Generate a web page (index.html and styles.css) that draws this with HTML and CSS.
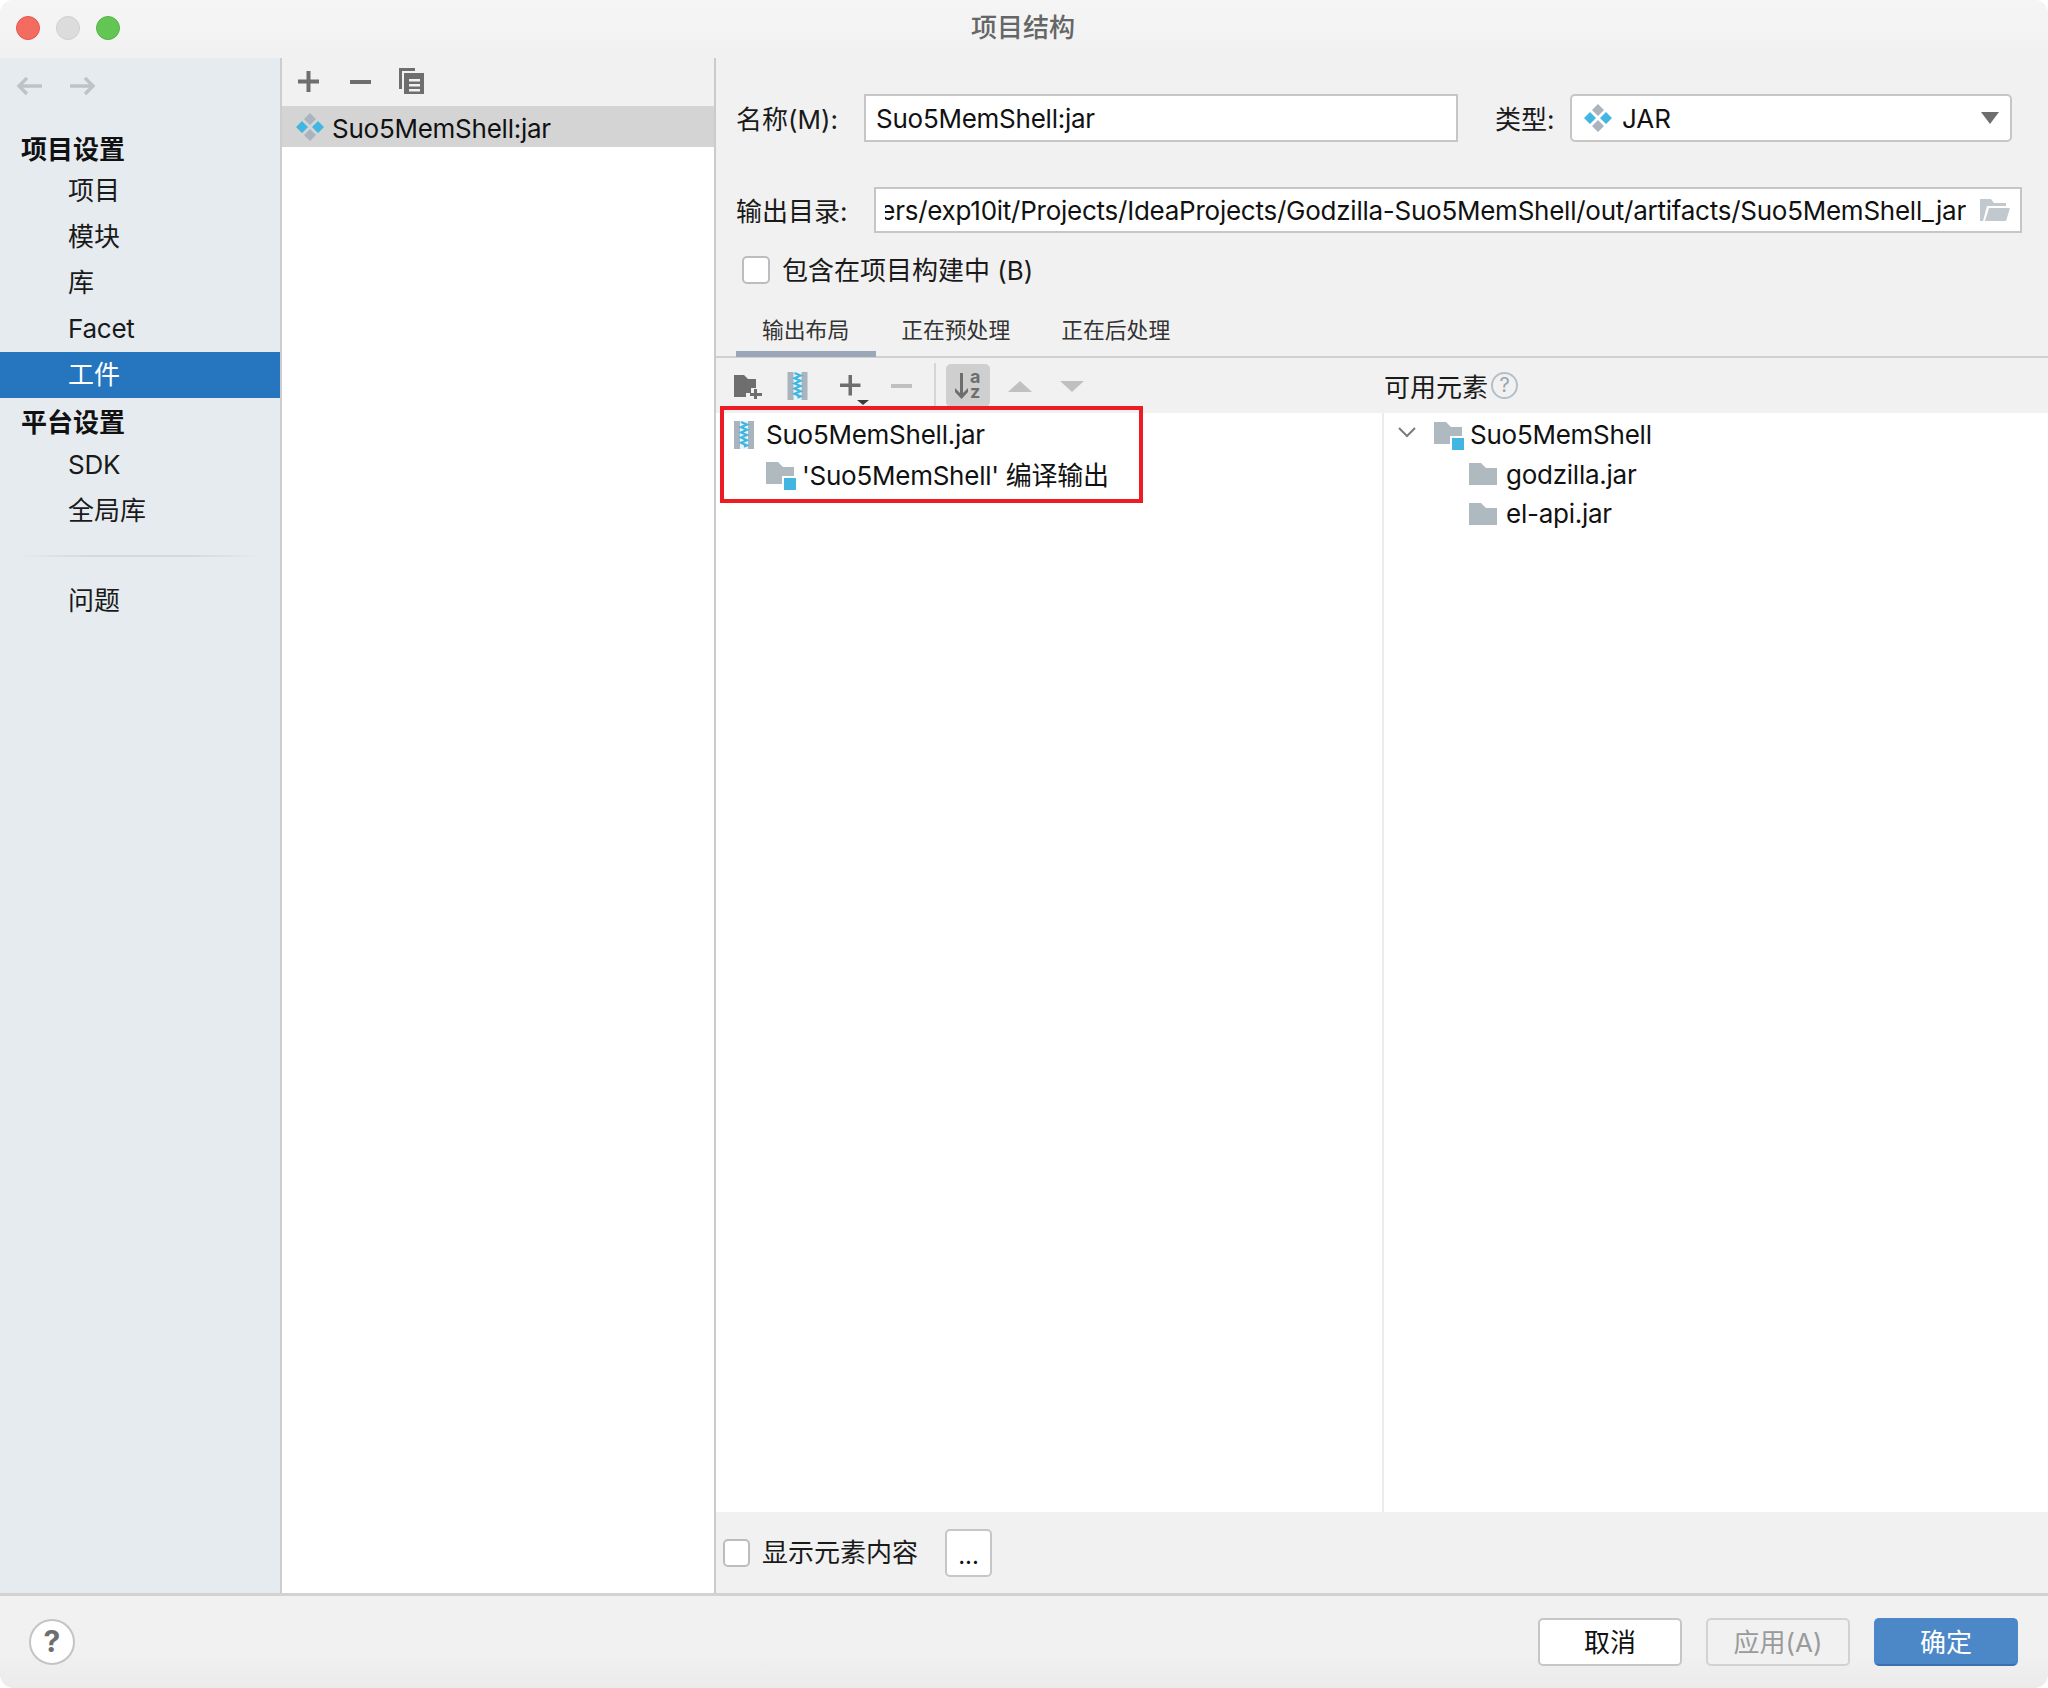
FILE: index.html
```html
<!DOCTYPE html>
<html lang="zh-CN">
<head>
<meta charset="utf-8">
<title>项目结构</title>
<link rel="stylesheet" href="styles.css">
</head>
<body>
<svg class="defs" width="0" height="0" aria-hidden="true">
  <symbol id="diamonds" viewBox="0 0 28 28">
    <path fill="#a9b4bf" d="M14 0l6 6-6 6-6-6zM14 16l6 6-6 6-6-6z"/>
    <path fill="#40b6e0" d="M6 8l6 6-6 6-6-6zM22 8l6 6-6 6-6-6z"/>
  </symbol>
  <symbol id="zip" viewBox="0 0 20 28">
    <rect width="20" height="28" fill="#a9b4bf"/>
    <rect x="6" width="8" height="28" fill="#e8f4fa"/>
    <path fill="none" stroke="#40b6e0" stroke-width="2.2" d="M7 1l6 2.6-6 2.6 6 2.6-6 2.6 6 2.6-6 2.6 6 2.6-6 2.6 6 2.6-3 1.4"/>
  </symbol>
  <symbol id="folder" viewBox="0 0 28 22">
    <path fill="#aeb9c0" d="M0 0h12l5 5h11v17H0z"/>
  </symbol>
  <symbol id="module" viewBox="0 0 30 28">
    <path fill="#aeb9c0" d="M0 0h12l5 5h11v17H0z"/>
    <rect x="16" y="14" width="14" height="14" fill="#fff"/>
    <rect x="18" y="16" width="12" height="12" fill="#40b6e0"/>
  </symbol>
</svg>

<div class="window">
  <header class="titlebar">
    <div class="lights">
      <span class="light red"></span>
      <span class="light gray"></span>
      <span class="light green"></span>
    </div>
    <div class="title">项目结构</div>
  </header>

  <div class="main">
    <aside class="sidebar">
      <div class="nav-arrows">
        <svg class="arrow" viewBox="0 0 26 20"><path fill="none" stroke="#bfc3c6" stroke-width="3.4" d="M26 10H3M11 2l-8 8 8 8"/></svg>
        <svg class="arrow" viewBox="0 0 26 20"><path fill="none" stroke="#bfc3c6" stroke-width="3.4" d="M0 10h23M15 2l8 8-8 8"/></svg>
      </div>
      <div class="side-head first">项目设置</div>
      <div class="side-item">项目</div>
      <div class="side-item">模块</div>
      <div class="side-item">库</div>
      <div class="side-item lat">Facet</div>
      <div class="side-item active">工件</div>
      <div class="side-head second">平台设置</div>
      <div class="side-item lat">SDK</div>
      <div class="side-item">全局库</div>
      <div class="side-sep"></div>
      <div class="side-item">问题</div>
    </aside>

    <section class="artifacts">
      <div class="art-toolbar">
        <svg class="tb-plus" viewBox="0 0 21 21"><path fill="#6e6e6e" d="M8.500 0h4v8.500h8.500v4h-8.500v8.500h-4v-8.500H0v-4h8.500z"/></svg>
        <svg class="tb-minus" viewBox="0 0 21 4"><rect width="21" height="4" fill="#6e6e6e"/></svg>
        <svg class="tb-copy" viewBox="0 0 25 26"><path fill="#6e6e6e" d="M0 0h16v3H3v18H0zM5 5h20v21H5zM10 11v2.500h11V11zM10 16v2.500h11V16zM10 21v2.500h11V21z" fill-rule="evenodd"/></svg>
      </div>
      <div class="art-row">
        <svg class="art-icon"><use href="#diamonds"/></svg>
        <span class="lat">Suo5MemShell:jar</span>
      </div>
    </section>

    <section class="detail">
      <div class="form-row first">
        <label class="lbl lbl-name">名称(M):</label>
        <div class="field name-field"><span class="lat">Suo5MemShell:jar</span></div>
        <label class="lbl lbl-type">类型:</label>
        <div class="field combo">
          <svg class="combo-icon"><use href="#diamonds"/></svg>
          <span class="combo-text">JAR</span>
          <svg class="combo-caret" viewBox="0 0 18 12"><path fill="#6e6e6e" d="M0 0h18L9 12z"/></svg>
        </div>
      </div>
      <div class="form-row second">
        <label class="lbl lbl-out">输出目录:</label>
        <div class="field path-field">
          <div class="path-clip"><span class="lat">/Users/exp10it/Projects/IdeaProjects/Godzilla-Suo5MemShell/out/artifacts/Suo5MemShell_jar</span></div>
          <svg class="path-icon" viewBox="0 0 30 22"><path fill="#c1c8ce" d="M0 0h11l3 4h12v3H7L3 22H0zM9 9h21l-4 13H5z"/></svg>
        </div>
      </div>
      <div class="check-row">
        <span class="check"></span>
        <span class="check-label">包含在项目构建中 (B)</span>
      </div>

      <div class="tabs">
        <div class="tab selected">输出布局</div>
        <div class="tab">正在预处理</div>
        <div class="tab">正在后处理</div>
      </div>

      <div class="layout-toolbar">
        <div class="lt-left">
          <svg class="i-newdir" viewBox="0 0 28 24"><path fill="#6e6e6e" d="M0 0h10l4 4h8v9h-5v5h-5v4H0z"/><path fill="#6e6e6e" d="M20 14h3v4h5v3h-5v3h-3v-3h-4v-3h4z"/></svg>
          <svg class="i-zip"><use href="#zip"/></svg>
          <svg class="i-plus" viewBox="0 0 29 30"><path fill="#6e6e6e" d="M8.500 0h3.500v8.500h8.500V12H12v8.500H8.500V12H0V8.500h8.500z"/><path fill="#3c3c3c" d="M17 25h12l-6 5z"/></svg>
          <svg class="i-minus" viewBox="0 0 21 4"><rect width="21" height="4" fill="#c0c0c0"/></svg>
          <span class="lt-sep"></span>
          <span class="sort-btn">
            <svg class="i-sort" viewBox="0 0 30 30">
              <path fill="#6e6e6e" d="M7 2h3v20l5-5v4l-6.500 7L2 21v-4l5 5z"/>
              <text x="17" y="12" class="sort-letter">a</text>
              <text x="17" y="27" class="sort-letter">z</text>
            </svg>
          </span>
          <svg class="i-up" viewBox="0 0 24 11"><path fill="#c0c0c0" d="M12 0l12 11H0z"/></svg>
          <svg class="i-down" viewBox="0 0 24 11"><path fill="#c0c0c0" d="M0 0h24L12 11z"/></svg>
        </div>
        <div class="lt-right">
          <span>可用元素</span>
          <span class="help-mini">?</span>
        </div>
      </div>

      <div class="trees">
        <div class="tree-left">
          <div class="tree-row r1">
            <svg class="t-zip"><use href="#zip"/></svg>
            <span class="lat">Suo5MemShell.jar</span>
          </div>
          <div class="tree-row r2">
            <svg class="t-module"><use href="#module"/></svg>
            <span class="lat">'Suo5MemShell' 编译输出</span>
          </div>
        </div>
        <div class="tree-right">
          <div class="tree-row r3">
            <svg class="chev" viewBox="0 0 18 11"><path fill="none" stroke="#7b7b7b" stroke-width="2" d="M1 1l8 8 8-8"/></svg>
            <svg class="t-module"><use href="#module"/></svg>
            <span class="lat">Suo5MemShell</span>
          </div>
          <div class="tree-row r4">
            <svg class="t-folder"><use href="#folder"/></svg>
            <span class="lat">godzilla.jar</span>
          </div>
          <div class="tree-row r4">
            <svg class="t-folder"><use href="#folder"/></svg>
            <span class="lat">el-api.jar</span>
          </div>
        </div>
        <div class="redbox"></div>
      </div>

      <div class="bottom-bar">
        <span class="check small"></span>
        <span class="bottom-label">显示元素内容</span>
        <span class="dots-btn">...</span>
      </div>
    </section>
  </div>

  <footer class="footer">
    <span class="help-btn">?</span>
    <div class="actions">
      <button class="btn">取消</button>
      <button class="btn disabled">应用(A)</button>
      <button class="btn primary">确定</button>
    </div>
  </footer>
</div>
</body>
</html>
```

FILE: styles.css
```css
* { box-sizing: border-box; }
html, body { margin: 0; padding: 0; background: #fff; }
body {
  width: 2048px;
  height: 1688px;
  overflow: hidden;
  font-family: "Inter", "Noto Sans CJK SC", sans-serif;
  font-size: 26px;
  color: #111;
}
.defs { position: absolute; }
svg { display: block; flex: none; }
.lat { letter-spacing: -0.25px; }

.window {
  width: 2048px;
  height: 1688px;
  display: flex;
  flex-direction: column;
  border-radius: 14px;
  overflow: hidden;
  background: #f1f1f1;
}

/* title bar */
.titlebar {
  height: 58px;
  flex: none;
  display: flex;
  align-items: center;
  justify-content: center;
  padding-right: 2px;
  background: linear-gradient(#f5f5f5, #f1f1f1);
  position: relative;
}
.lights {
  position: absolute;
  left: 16px;
  top: 16px;
  display: flex;
  gap: 16px;
}
.light { width: 24px; height: 24px; border-radius: 50%; }
.red { background: #f46c60; border: 1px solid #e2574c; }
.gray { background: #dcdcdc; border: 1px solid #cfcfcf; }
.green { background: #62c554; border: 1px solid #56b548; }
.title { font-size: 26px; color: #666; font-weight: 500; line-height: 1; margin-top: -3px; }

.main { flex: 1; display: flex; min-height: 0; }

/* sidebar */
.sidebar {
  width: 282px;
  flex: none;
  background: #e6ebf0;
  border-right: 2px solid #cbcdcf;
}
.nav-arrows {
  display: flex;
  gap: 28px;
  padding: 18px 0 0 16px;
  height: 69px;
}
.arrow { width: 26px; height: 20px; }
.side-head {
  height: 44px;
  padding-left: 21px;
  font-weight: 700;
  color: #111;
  font-size: 26px;
}
.side-head.first { height: 41px; line-height: 45px; }
.side-head.second { line-height: 50px; }
.side-item {
  height: 46px;
  line-height: 46px;
  padding-left: 68px;
  color: #1a1a1a;
}
.side-item.active { background: #2675bf; color: #fff; }
.side-sep {
  height: 2px;
  margin: 21px 18px 21px 18px;
  background: linear-gradient(90deg, #e6ebf0, #d5d8db 30%, #d5d8db 70%, #e6ebf0);
}

/* artifacts list */
.artifacts {
  width: 434px;
  flex: none;
  background: #fff;
  border-right: 2px solid #cbcbcb;
}
.art-toolbar {
  height: 48px;
  background: #f1f1f1;
  display: flex;
  align-items: center;
  padding-left: 16px;
}
.tb-plus { width: 21px; height: 21px; margin-top: -1px; }
.tb-minus { width: 21px; height: 4px; margin-left: 31px; margin-top: -1px; }
.tb-copy { width: 25px; height: 26px; margin-left: 28px; margin-top: -2px; }
.art-row {
  height: 41px;
  background: #d4d4d4;
  display: flex;
  align-items: center;
  padding-left: 14px;
}
.art-icon { width: 28px; height: 28px; }
.art-row span { margin-left: 8px; padding-top: 3px; }

/* detail */
.detail { flex: 1; min-width: 0; display: flex; flex-direction: column; }
.form-row { display: flex; align-items: center; padding-left: 20px; }
.form-row.first { margin-top: 36px; height: 48px; }
.form-row.second { margin-top: 45px; height: 46px; }
.lbl { color: #1a1a1a; flex: none; padding-bottom: 2px; }
.lbl-name { width: 128px; }
.lbl-type { width: 75px; margin-left: 37px; }
.lbl-out { width: 138px; }
.field {
  background: #fff;
  border: 2px solid #c6c6c6;
  height: 100%;
  display: flex;
  align-items: center;
}
.name-field { width: 594px; padding-left: 10px; }
.combo { width: 442px; border-radius: 5px; padding-left: 12px; }
.combo-icon { width: 28px; height: 28px; }
.combo-text { margin-left: 10px; }
.combo-caret { width: 18px; height: 12px; margin-left: auto; margin-right: 11px; }
.path-field { width: 1148px; padding-left: 9px; }
.path-clip {
  width: 1081px;
  overflow: hidden;
  display: flex;
  justify-content: flex-end;
  white-space: nowrap;
}
.path-clip span { flex: none; }
.path-icon { width: 30px; height: 22px; margin-left: 14px; }

.check-row { display: flex; align-items: center; height: 28px; margin: 23px 0 0 26px; }
.check {
  width: 28px;
  height: 28px;
  flex: none;
  background: #fff;
  border: 2px solid #bdbdbd;
  border-radius: 5px;
}
.check-label { margin-left: 12px; color: #1a1a1a; padding-bottom: 3px; }

.tabs {
  height: 74px;
  flex: none;
  display: flex;
  align-items: flex-end;
  padding-left: 20px;
  border-bottom: 2px solid #d0d0d0;
}
.tab {
  height: 48px;
  line-height: 42px;
  font-size: 21.8px;
  padding: 0 26px 0 25px;
  color: #333;
  margin-bottom: -1px;
}
.tab.selected { border-bottom: 6px solid #9aa7b8; padding: 0 27px 0 26px; }

.layout-toolbar { height: 55px; flex: none; display: flex; }
.lt-left {
  width: 666px;
  flex: none;
  display: flex;
  align-items: center;
  padding-left: 18px;
  position: relative;
}
.i-newdir { width: 28px; height: 24px; margin-top: 3px; }
.i-zip { width: 21px; height: 28px; margin-left: 25px; margin-top: 1px; }
.i-plus { width: 29px; height: 30px; margin-left: 32px; margin-top: 8px; }
.i-minus { width: 21px; height: 4px; margin-left: 22px; margin-top: 1px; }
.lt-sep { width: 2px; height: 46px; background: #d6d6d6; margin-left: 22px; }
.sort-btn {
  width: 44px;
  height: 43px;
  margin-left: 10px;
  background: #cfcfcf;
  border-radius: 5px;
  display: flex;
  align-items: center;
  justify-content: center;
}
.i-sort { width: 30px; height: 30px; }
.sort-letter { font-size: 18px; font-weight: 700; fill: #6e6e6e; font-family: "Inter", sans-serif; }
.i-up { width: 24px; height: 11px; margin-left: 18px; margin-top: 2px; }
.i-down { width: 24px; height: 11px; margin-left: 28px; margin-top: 2px; }
.lt-right {
  display: flex;
  align-items: center;
  padding-left: 2px;
  color: #1a1a1a;
}
.help-mini {
  width: 27px;
  height: 27px;
  margin-left: 3px;
  border: 2px solid #b4bfc7;
  border-radius: 50%;
  color: #9aa5ad;
  font-size: 20px;
  line-height: 23px;
  text-align: center;
}

.trees { flex: 1; min-height: 0; display: flex; background: #fff; position: relative; }
.tree-left { width: 668px; flex: none; border-right: 2px solid #ececec; padding-top: 2px; }
.tree-right { flex: 1; padding-top: 2px; }
.tree-row { display: flex; align-items: center; height: 39.5px; white-space: nowrap; }
.r1 { padding-left: 18px; height: 39px; }
.t-zip { width: 20px; height: 28px; }
.r1 span { margin-left: 12px; }
.r2 { padding-left: 50px; }
.t-module { width: 30px; height: 28px; margin-top: 5px; }
.r2 span { margin-left: 6px; }
.r3 { padding-left: 14px; }
.chev { width: 18px; height: 11px; margin-top: -4px; }
.r3 .t-module { margin-left: 18px; margin-top: 2px; }
.r3 span { margin-left: 6px; }
.r4 { padding-left: 85px; }
.t-folder { width: 28px; height: 22px; }
.r4 span { margin-left: 9px; }
.redbox {
  position: absolute;
  left: 4px;
  top: -7px;
  width: 423px;
  height: 97px;
  border: 4px solid #ed1c24;
}

.bottom-bar {
  height: 81px;
  flex: none;
  display: flex;
  align-items: center;
  padding-left: 7px;
  background: #f1f1f1;
}
.check.small { width: 27px; height: 28px; }
.bottom-label { margin-left: 12px; color: #1a1a1a; padding-bottom: 4px; }
.dots-btn {
  width: 47px;
  height: 48px;
  margin-left: 27px;
  background: #fff;
  border: 2px solid #c6c6c6;
  border-radius: 5px;
  text-align: center;
  line-height: 50px;
  font-size: 24px;
}

/* footer */
.footer {
  height: 95px;
  flex: none;
  border-top: 3px solid #d2d2d2;
  background: linear-gradient(#f1f1f1 60%, #ebebeb);
  display: flex;
  align-items: center;
  padding: 0 30px 0 29px;
}
.help-btn {
  width: 46px;
  height: 46px;
  border: 2px solid #c4c4c4;
  border-radius: 50%;
  background: #fff;
  color: #6e6e6e;
  text-align: center;
  font-size: 30px;
  font-weight: 700;
  line-height: 41px;
}
.actions { margin-left: auto; display: flex; gap: 24px; }
.btn {
  width: 144px;
  height: 48px;
  padding: 0 0 3px;
  font: inherit;
  font-size: 26px;
  background: #fff;
  color: #111;
  border: 2px solid #c6c6c6;
  border-radius: 5px;
}
.btn.disabled { background: #f1f1f1; color: #9a9a9a; border-color: #d2d2d2; }
.btn.primary { background: #4c87c8; color: #fff; border-color: #4c87c8; border-bottom-color: #3a6fb0; }
```
